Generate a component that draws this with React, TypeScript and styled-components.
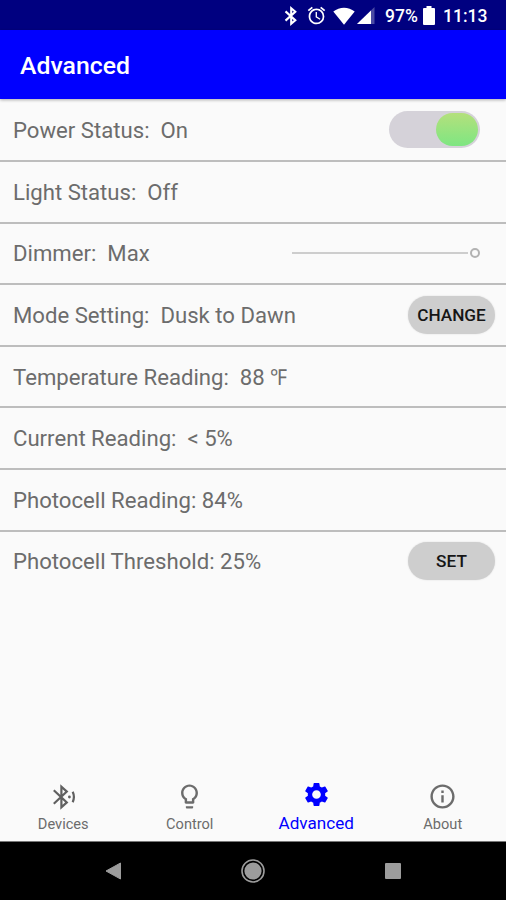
import React from "react";
import styled, { createGlobalStyle } from "styled-components";
import {
  MdAccessAlarm,
  MdSettings,
  MdLightbulbOutline,
  MdInfoOutline,
} from "react-icons/md";

const GlobalStyle = createGlobalStyle`
  * { box-sizing: border-box; }
  body { margin: 0; font-family: Roboto, "Liberation Sans", sans-serif; }
  button { font-family: inherit; border: 0; padding: 0; margin: 0; background: none; }
`;

const Screen = styled.div`
  width: 506px;
  height: 900px;
  display: flex;
  flex-direction: column;
  overflow: hidden;
  background: #fafafa;
`;

const StatusBar = styled.header`
  height: 30px;
  flex: none;
  display: flex;
  align-items: center;
  justify-content: flex-end;
  padding: 1px 18px 0 0;
  background: #000080;
  color: #fff;
  svg { display: block; flex: none; }
`;

const StatusText = styled.span<{ $width: number; $gap: number }>`
  width: ${(p) => p.$width}px;
  margin-left: ${(p) => p.$gap}px;
  font-size: 17.5px;
  font-weight: 500;
  line-height: 30px;
  white-space: nowrap;
`;

const StatusIcon = styled.span<{ $gap?: number }>`
  margin-left: ${(p) => p.$gap ?? 0}px;
`;

const AppBar = styled.div`
  height: 69px;
  flex: none;
  display: flex;
  align-items: center;
  padding: 2px 20px 0;
  background: #0000ff;
  box-shadow: 0 1px 3px rgba(0, 0, 0, 0.32);
  z-index: 1;
`;

const Title = styled.h1`
  margin: 0;
  color: #fff;
  font-size: 24.8px;
  font-weight: 500;
`;

const Settings = styled.main`
  flex: 1;
  display: flex;
  flex-direction: column;
`;

const Row = styled.section`
  height: 61.6px;
  flex: none;
  display: flex;
  align-items: center;
  justify-content: space-between;
  padding: 0 11px 0 13px;
  border-bottom: 2px solid #bdbdbd;
  &:first-child { height: 63px; }
  &:last-child { border-bottom-color: transparent; }
`;

const Label = styled.span`
  color: #6c6c6c;
  font-size: 22.15px;
  line-height: 28px;
  white-space: pre;
`;

const Unit = styled.span`
  display: inline-block;
  transform: scaleX(0.88);
  transform-origin: left;
`;

const Switch = styled.button`
  width: 91px;
  height: 37px;
  margin: 0 15px 0 0;
  padding: 2px;
  display: flex;
  justify-content: flex-end;
  border-radius: 19px;
  background: #d5d2d9;
`;

const SwitchThumb = styled.span`
  width: 42px;
  height: 33px;
  border-radius: 17px;
  background: linear-gradient(#b4e07c, #7ee682);
`;

const Slider = styled.div`
  width: 188px;
  display: flex;
  align-items: center;
  gap: 2px;
  margin: 0 15px 1px 0;
`;

const SliderTrack = styled.span`
  flex: 1;
  height: 2px;
  background: #cdcdcd;
`;

const SliderThumb = styled.span`
  width: 10px;
  height: 10px;
  border: 2px solid #b2b2b2;
  border-radius: 50%;
`;

const PillButton = styled.button`
  width: 87px;
  height: 38px;
  border-radius: 19px;
  background: #cecece;
  box-shadow: 0 0 2px rgba(0, 0, 0, 0.12);
  color: #161616;
  font-size: 17.2px;
  font-weight: 500;
`;

const Tabs = styled.nav`
  height: 72px;
  flex: none;
  display: grid;
  grid-template-columns: repeat(4, 1fr);
  border-bottom: 1px solid #777;
`;

const Tab = styled.button<{ $active?: boolean }>`
  display: flex;
  flex-direction: column;
  align-items: center;
  justify-content: flex-start;
  padding-top: ${(p) => (p.$active ? 10 : 12)}px;
  gap: ${(p) => (p.$active ? 4 : 3)}px;
  color: ${(p) => (p.$active ? "#0000ff" : "#6c6c6c")};
  font-size: ${(p) => (p.$active ? 17.1 : 14.6)}px;
  line-height: 20px;
  svg { display: block; flex: none; }
`;

const NavBar = styled.footer`
  height: 58px;
  flex: none;
  display: flex;
  align-items: center;
  justify-content: space-between;
  padding: 0 105px 0 105px;
  background: #000;
  svg { display: block; }
`;

function BluetoothIcon() {
  return (
    <svg width="14" height="20" viewBox="0 0 14 20" fill="none" stroke="#fff" strokeWidth="2.1">
      <path d="M1.5 5.4 11.3 14.2 7.2 17.7V2.3l4.1 3.5-9.8 8.8" />
    </svg>
  );
}

function BluetoothSignalIcon() {
  return (
    <svg width="29" height="29" viewBox="0 0 29 29" fill="none" stroke="#606060" strokeWidth="2.2">
      <path d="M4.8 8.2 17.8 20.4 12.4 25.2V4.8l5.4 4.8L4.8 21.8" />
      <path d="M23.7 9.8q2.4 5.2 0 10.4" />
      <circle cx="20.4" cy="15" r="1.4" fill="#606060" stroke="none" />
    </svg>
  );
}

function WifiIcon() {
  return (
    <svg width="22" height="18" viewBox="0 0 22 18">
      <path d="M0.3 4.6C6.5-.5 15.5-.5 21.7 4.6L11 17.7Z" fill="#fff" />
    </svg>
  );
}

function CellIcon() {
  return (
    <svg width="18" height="17" viewBox="0 0 18 17">
      <path d="M17.5 0V17H0Z" fill="#4a4aa4" />
      <path d="M14 3.4V17H0Z" fill="#fff" />
    </svg>
  );
}

function BatteryIcon() {
  return (
    <svg width="12" height="19" viewBox="0 0 12 19">
      <path d="M3.5 0h5v2H11q1 0 1 1v15q0 1-1 1H1q-1 0-1-1V3q0-1 1-1h2.5Z" fill="#fff" />
    </svg>
  );
}

export default function App() {
  return (
    <Screen>
      <GlobalStyle />
      <StatusBar>
        <StatusIcon><BluetoothIcon /></StatusIcon>
        <StatusIcon $gap={8}><MdAccessAlarm size={21} /></StatusIcon>
        <StatusIcon $gap={6}><WifiIcon /></StatusIcon>
        <StatusIcon $gap={2}><CellIcon /></StatusIcon>
        <StatusText $width={33} $gap={10}>97%</StatusText>
        <StatusIcon $gap={5}><BatteryIcon /></StatusIcon>
        <StatusText $width={45} $gap={8}>11:13</StatusText>
      </StatusBar>
      <AppBar><Title>Advanced</Title></AppBar>
      <Settings>
        <Row>
          <Label>{"Power Status:  On"}</Label>
          <Switch role="switch" aria-checked="true"><SwitchThumb /></Switch>
        </Row>
        <Row><Label>{"Light Status:  Off"}</Label></Row>
        <Row>
          <Label>{"Dimmer:  Max"}</Label>
          <Slider><SliderTrack /><SliderThumb /></Slider>
        </Row>
        <Row>
          <Label>{"Mode Setting:  Dusk to Dawn"}</Label>
          <PillButton>CHANGE</PillButton>
        </Row>
        <Row><Label>{"Temperature Reading:  88 "}<Unit>℉</Unit></Label></Row>
        <Row><Label>{"Current Reading:  < 5%"}</Label></Row>
        <Row><Label>Photocell Reading: 84%</Label></Row>
        <Row>
          <Label>Photocell Threshold: 25%</Label>
          <PillButton>SET</PillButton>
        </Row>
      </Settings>
      <Tabs>
        <Tab><BluetoothSignalIcon />Devices</Tab>
        <Tab><MdLightbulbOutline size={29} />Control</Tab>
        <Tab $active><MdSettings size={29} />Advanced</Tab>
        <Tab><MdInfoOutline size={29} />About</Tab>
      </Tabs>
      <NavBar>
        <svg width="16" height="18" viewBox="0 0 16 18">
          <path d="M15.5 1v16L1 9Z" fill="#9c9c9c" stroke="#9c9c9c" strokeLinejoin="round" />
        </svg>
        <svg width="24" height="24" viewBox="0 0 24 24">
          <circle cx="12" cy="12" r="11" fill="none" stroke="#9c9c9c" strokeWidth="1.6" />
          <circle cx="12" cy="12" r="8.6" fill="#9c9c9c" />
        </svg>
        <svg width="16" height="16" viewBox="0 0 16 16">
          <rect width="16" height="16" rx="1" fill="#9c9c9c" />
        </svg>
      </NavBar>
    </Screen>
  );
}
